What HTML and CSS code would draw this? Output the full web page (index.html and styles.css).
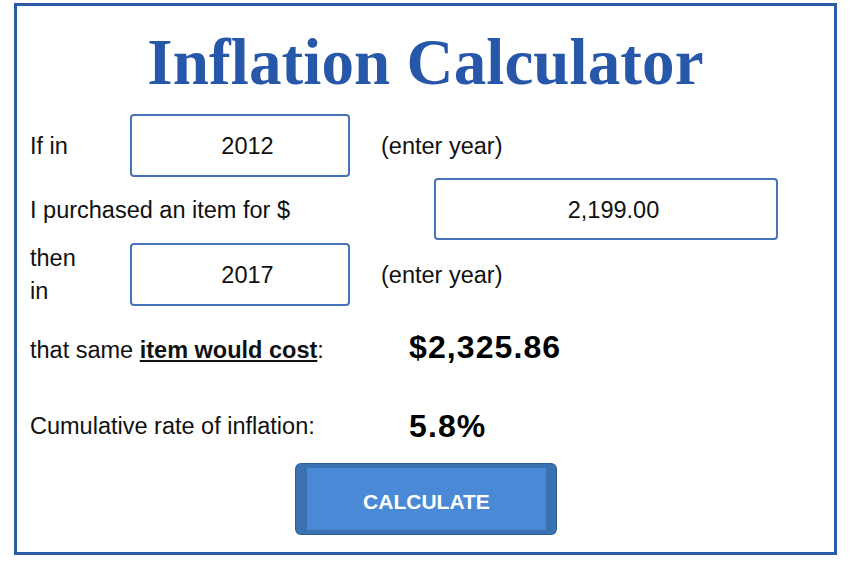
FILE: index.html
```html
<!DOCTYPE html>
<html lang="en">
<head>
<meta charset="utf-8">
<title>Inflation Calculator</title>
<link rel="stylesheet" href="styles.css">
</head>
<body>
<main class="frame">
  <h1 class="title">Inflation Calculator</h1>
  <div class="row row-year">
    <span class="label">If in</span>
    <input class="field field-year" type="text" value="2012">
    <span class="hint">(enter year)</span>
  </div>
  <div class="row row-amount">
    <span class="label label-wide">I purchased an item for $</span>
    <input class="field field-amount" type="text" value="2,199.00">
  </div>
  <div class="row row-year row-then">
    <span class="label">then<br>in</span>
    <input class="field field-year" type="text" value="2017">
    <span class="hint">(enter year)</span>
  </div>
  <div class="result result-cost">
    <span class="label label-result">that same <strong class="em">item would cost</strong>:</span>
    <span class="value">$2,325.86</span>
  </div>
  <div class="result result-rate">
    <span class="label label-result">Cumulative rate of inflation:</span>
    <span class="value">5.8%</span>
  </div>
  <button class="calc" type="button">CALCULATE</button>
</main>
</body>
</html>
```
FILE: styles.css
```css
html, body {
  margin: 0;
  padding: 0;
  background: #ffffff;
}

body {
  font-family: "Liberation Sans", Arial, sans-serif;
  color: #111111;
}

.frame {
  box-sizing: border-box;
  width: 823px;
  height: 552px;
  margin: 3px 0 0 14px;
  border: 3px solid #2e5ba8;
  padding: 20px 0 0 13px;
  display: flex;
  flex-direction: column;
}

.title {
  margin: 0 0 16px -13px;
  font-family: "Liberation Serif", "Times New Roman", serif;
  font-weight: bold;
  font-size: 65px;
  line-height: 72px;
  height: 72px;
  color: #2757a9;
  text-align: center;
  letter-spacing: 0.1px;
}

.row {
  display: flex;
  align-items: center;
  font-size: 23.5px;
}

.row-year {
  height: 63px;
}

.row-amount {
  height: 62px;
  margin-top: 1px;
}

.row-then {
  margin-top: 3px;
  line-height: 33px;
}

.label {
  width: 100px;
  flex: none;
}

.row .label {
  padding-top: 2px;
}

.row-then .label {
  padding-top: 0;
}

.label-wide {
  width: 404px;
}

.field {
  box-sizing: border-box;
  height: 100%;
  border: 2px solid #4572b8;
  border-radius: 4px;
  background: #ffffff;
  font-family: "Liberation Sans", Arial, sans-serif;
  font-size: 23.5px;
  color: #111111;
  text-align: center;
  padding: 2px 0 0 15px;
  margin: 0;
  outline: none;
  flex: none;
}

.field-year {
  width: 220px;
}

.field-amount {
  width: 344px;
}

.hint {
  margin-left: 31px;
  padding-top: 2px;
}

.result {
  display: flex;
  height: 40px;
  font-size: 23.5px;
}

.result-cost {
  margin-top: 21px;
  align-items: baseline;
}

.result-rate {
  margin-top: 39px;
  align-items: center;
}

.label-result {
  width: 379px;
  line-height: 27px;
}

.em {
  font-weight: bold;
  text-decoration: underline;
  text-decoration-thickness: 2px;
  text-underline-offset: 2px;
}

.value {
  font-weight: bold;
  font-size: 32px;
  line-height: 40px;
  letter-spacing: 1.1px;
  color: #000000;
}

.calc {
  box-sizing: border-box;
  align-self: center;
  width: 260px;
  height: 70px;
  margin: 18px 0 0 -12px;
  background: #4a89d5;
  border-style: solid;
  border-color: #3a72b1;
  border-width: 4px 10px 4px 11px;
  border-radius: 5px;
  box-shadow: 0 0 0 1px #2d5d95;
  color: #ffffff;
  font-family: "Liberation Sans", Arial, sans-serif;
  font-weight: bold;
  font-size: 21px;
  padding: 5px 0 0 0;
  cursor: pointer;
}
```
